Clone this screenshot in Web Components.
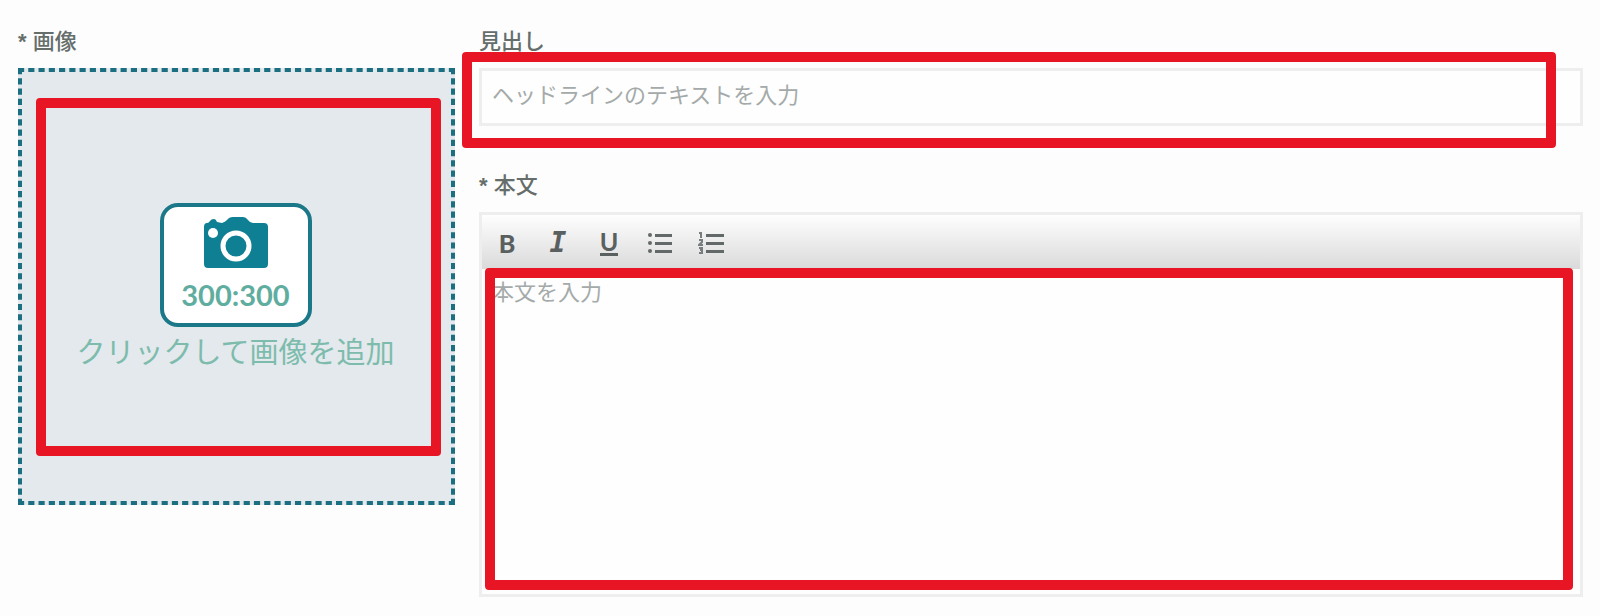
<!DOCTYPE html>
<html lang="ja">
<head>
<meta charset="utf-8">
<title>画像とテキスト</title>
<style>
  body {
    margin: 0;
    background: #fdfdfd;
    color: #666e6c;
    font: 22px/28px "Liberation Sans", "Noto Sans CJK JP", sans-serif;
  }
</style>
</head>
<body>
<module-editor></module-editor>

<script>
// marco rojo que resalta una zona, se coloca encima del contenido
class HighlightFrame extends HTMLElement {
  constructor() {
    super()
    this.attachShadow({ mode: 'open' })
  }
  connectedCallback() {
    this.shadowRoot.innerHTML = `
    <style>
    :host {
      position: absolute;
      box-sizing: border-box;
      border: 10px solid #e81525;
      border-radius: 4px;
      pointer-events: none;
    }
    </style>
    `
  }
}
customElements.define('highlight-frame', HighlightFrame)

class ImagePicker extends HTMLElement {
  constructor() {
    super()
    this.attachShadow({ mode: 'open' })
  }

  getTemplate() {
    const template = document.createElement('template')
    template.innerHTML = `
    ${this.getStyles()}
    <label for="pick"><b>*</b> <slot></slot></label>
    <div class="drop">
      <svg class="dashes" aria-hidden="true">
        <line x1="0" y1="0" x2="100%" y2="0" pathLength="426"/>
        <line x1="0" y1="100%" x2="100%" y2="100%" pathLength="426"/>
        <line x1="0" y1="0" x2="0" y2="100%" pathLength="426"/>
        <line x1="100%" y1="0" x2="100%" y2="100%" pathLength="426"/>
      </svg>
      <button id="pick" type="button">
        <span class="card">
          <svg width="66" height="52" viewBox="0 0 66 52" aria-hidden="true">
            <path fill="#0f7f93" d="M4 6 Q6 6 7 4 Q8 2 11 2 Q13 2 14 5 L19 6 Q22 5 24 3 Q26 0 30 0 H40 Q43 0 45 3 Q47 6 50 6 H61 Q65 6 65 10 V47 Q65 51 61 51 H5 Q1 51 1 47 V10 Q1 6 4 6Z"/>
            <circle cx="10" cy="16" r="5" fill="#fff"/>
            <circle cx="33" cy="29" r="13" fill="none" stroke="#fff" stroke-width="5"/>
          </svg>
          <span class="size">300:300</span>
        </span>
        <span class="hint">クリックして画像を追加</span>
      </button>
      <highlight-frame></highlight-frame>
    </div>
    `
    return template
  }
  getStyles() {
    return `
    <style>
    :host {
      display: flex;
      flex-direction: column;
      gap: 12px;
    }
    label { font-weight: 500; }
    .drop {
      position: relative;
      display: flex;
      aspect-ratio: 1;
      background: #e3e9ec;
    }
    .dashes {
      position: absolute;
      inset: 0;
      width: 100%;
      height: 100%;
    }
    /* la mitad exterior del trazo queda recortada */
    .dashes line {
      stroke: #1b6f80;
      stroke-width: 8;
      stroke-dasharray: 6 4;
    }
    button {
      flex: 1;
      display: flex;
      flex-direction: column;
      align-items: center;
      justify-content: center;
      gap: 8px;
      padding: 0 2px 0 0;
      border: 0;
      background: none;
      font: inherit;
      color: #7dbcac;
      cursor: pointer;
    }
    .card {
      box-sizing: border-box;
      display: flex;
      flex-direction: column;
      align-items: center;
      gap: 10px;
      min-width: 152px;
      padding: 10px 16px 12px;
      border: 4px solid #1b7888;
      border-radius: 18px;
      background: #fff;
    }
    .card svg { display: block; }
    .size {
      font: 700 29px/32px Lato, sans-serif;
      color: #5fad9f;
    }
    .hint {
      font-size: 29px;
      line-height: 36px;
    }
    highlight-frame { inset: 30px 14px 49px 18px; }
    </style>
    `
  }
  connectedCallback() {
    this.shadowRoot.appendChild(this.getTemplate().content.cloneNode(true))
  }
}
customElements.define('image-picker', ImagePicker)

class HeadlineField extends HTMLElement {
  constructor() {
    super()
    this.attachShadow({ mode: 'open' })
  }

  getTemplate() {
    const template = document.createElement('template')
    template.innerHTML = `
    <style>
    :host {
      display: flex;
      flex-direction: column;
      gap: 12px;
    }
    label { font-weight: 500; }
    .box {
      position: relative;
      display: flex;
    }
    input {
      flex: 1;
      min-width: 0;
      box-sizing: border-box;
      padding: 10px 10px 12px;
      border: 3px solid #eeeeef;
      background: #fefefe;
      font: inherit;
      line-height: 30px;
      color: inherit;
    }
    input::placeholder { color: #a4aaa9; opacity: 1; }
    highlight-frame { inset: -16px 27px -22px -17px; }
    </style>
    <label for="headline"><slot></slot></label>
    <div class="box">
      <input id="headline" type="text" placeholder="${this.getAttribute('placeholder')}">
      <highlight-frame></highlight-frame>
    </div>
    `
    return template
  }
  connectedCallback() {
    this.shadowRoot.appendChild(this.getTemplate().content.cloneNode(true))
  }
}
customElements.define('headline-field', HeadlineField)

class EditorToolbar extends HTMLElement {
  constructor() {
    super()
    this.attachShadow({ mode: 'open' })
  }

  getTemplate() {
    const template = document.createElement('template')
    template.innerHTML = `
    <style>
    :host {
      display: flex;
      gap: 15px;
      padding: 10px 7px 8px;
      background: linear-gradient(#fefefe, #dadada);
    }
    button {
      display: flex;
      align-items: center;
      justify-content: center;
      width: 36px;
      height: 36px;
      padding: 0;
      border: 0;
      background: none;
      color: #59605f;
      font: 900 25px/24px Lato, sans-serif;
      cursor: pointer;
    }
    .italic { font: italic 700 28px/24px "DejaVu Sans Mono", monospace; }
    .underline span {
      border-bottom: 3px solid;
      font-weight: 700;
      line-height: 23px;
    }
    svg { display: block; }
    </style>
    <button type="button" aria-label="太字">B</button>
    <button type="button" class="italic" aria-label="斜体">I</button>
    <button type="button" class="underline" aria-label="下線"><span>U</span></button>
    <button type="button" aria-label="箇条書き">
      <svg width="26" height="22" viewBox="0 0 26 22" fill="#626968">
        <circle cx="3" cy="3" r="2"/><circle cx="3" cy="11" r="2"/><circle cx="3" cy="19" r="2"/>
        <path d="M8 2h17v3H8z M8 10h17v3H8z M8 18h17v3H8z"/>
      </svg>
    </button>
    <button type="button" aria-label="番号付きリスト">
      <svg width="26" height="22" viewBox="0 0 26 22" fill="#626968">
        <path d="M8 2h18v3H8z M8 10h18v3H8z M8 18h18v3H8z"/>
        <path fill="none" stroke="#777e7d" stroke-width="2" d="M1 1h2v5 M1 8h3v2l-3 3h4 M1 16h3v5h-3 M2 18h2"/>
      </svg>
    </button>
    `
    return template
  }
  connectedCallback() {
    this.shadowRoot.appendChild(this.getTemplate().content.cloneNode(true))
  }
}
customElements.define('editor-toolbar', EditorToolbar)

class BodyField extends HTMLElement {
  constructor() {
    super()
    this.attachShadow({ mode: 'open' })
  }

  getTemplate() {
    const template = document.createElement('template')
    template.innerHTML = `
    <style>
    :host {
      display: flex;
      flex-direction: column;
      gap: 12px;
    }
    label { font-weight: 500; }
    .box {
      position: relative;
      display: flex;
      flex-direction: column;
      border: 3px solid #eeeeef;
      background: #fefefe;
    }
    textarea {
      display: block;
      box-sizing: border-box;
      width: 100%;
      min-height: 325px;
      padding: 9px 10px;
      border: 0;
      background: none;
      resize: none;
      font: inherit;
      line-height: 30px;
      color: inherit;
    }
    textarea::placeholder { color: #a4aaa9; opacity: 1; }
    highlight-frame { inset: 53px 7px 4px 3px; }
    </style>
    <label for="body"><b>*</b> <slot></slot></label>
    <div class="box">
      <editor-toolbar></editor-toolbar>
      <textarea id="body" placeholder="${this.getAttribute('placeholder')}"></textarea>
      <highlight-frame></highlight-frame>
    </div>
    `
    return template
  }
  connectedCallback() {
    this.shadowRoot.appendChild(this.getTemplate().content.cloneNode(true))
  }
}
customElements.define('body-field', BodyField)

class ModuleEditor extends HTMLElement {
  constructor() {
    super()
    this.attachShadow({ mode: 'open' })
  }

  getTemplate() {
    const template = document.createElement('template')
    template.innerHTML = `
    <style>
    :host {
      display: grid;
      grid-template-columns: minmax(0, 437fr) minmax(0, 1104fr);
      align-items: start;
      gap: 24px;
      padding: 28px 17px 18px 18px;
    }
    .fields {
      display: flex;
      flex-direction: column;
      gap: 46px;
    }
    </style>
    <image-picker>画像</image-picker>
    <div class="fields">
      <headline-field placeholder="ヘッドラインのテキストを入力">見出し</headline-field>
      <body-field placeholder="本文を入力">本文</body-field>
    </div>
    `
    return template
  }
  connectedCallback() {
    this.shadowRoot.appendChild(this.getTemplate().content.cloneNode(true))
  }
}
customElements.define('module-editor', ModuleEditor)
</script>
</body>
</html>
